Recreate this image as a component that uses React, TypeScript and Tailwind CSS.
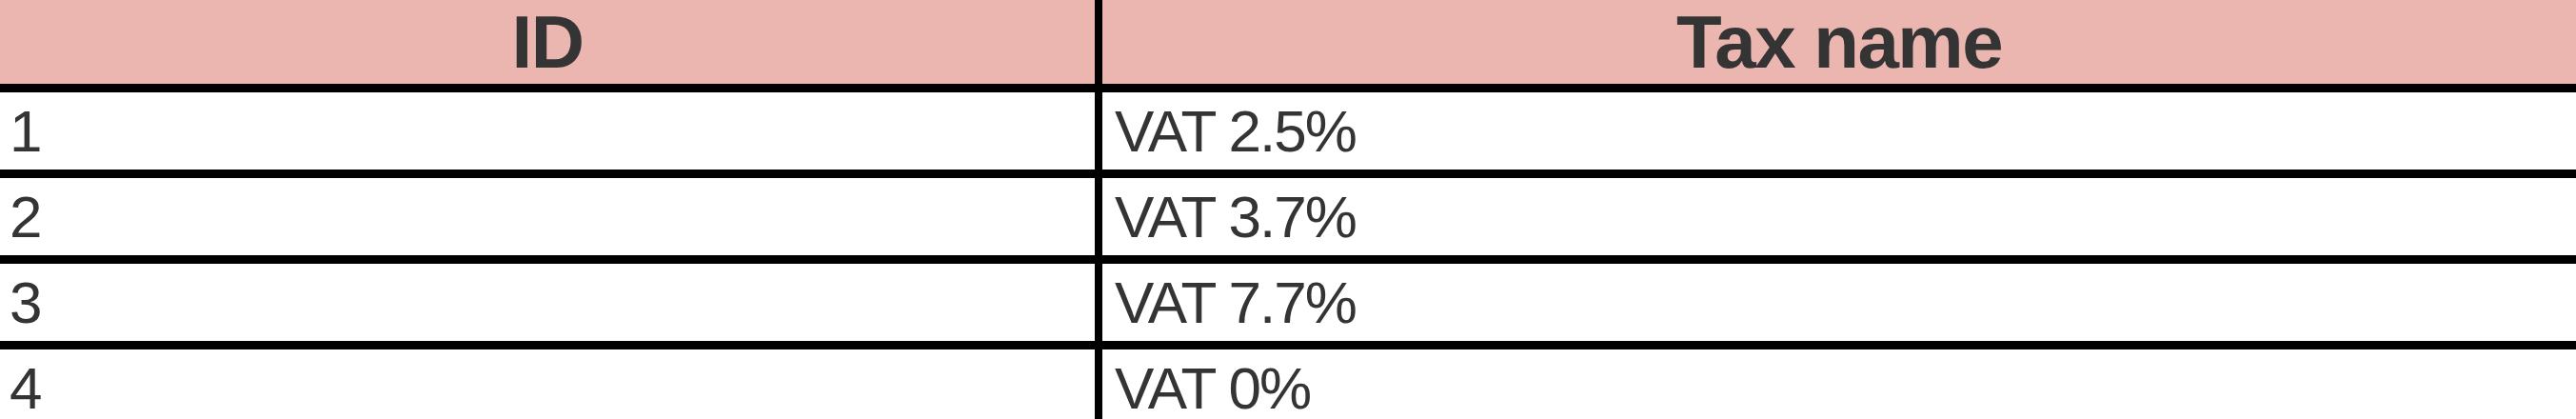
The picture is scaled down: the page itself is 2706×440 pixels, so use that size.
const rows = [
  { id: 1, name: "VAT 2.5%" },
  { id: 2, name: "VAT 3.7%" },
  { id: 3, name: "VAT 7.7%" },
  { id: 4, name: "VAT 0%" },
];

export default function App() {
  return (
    <div className="w-[2706px] h-[440px] overflow-hidden bg-white text-[#343434] font-['Liberation_Sans',Arial,sans-serif]">
      {/* Header */}
      <div className="flex h-[97px] bg-[#ebb5b0] border-b-[9px] border-black">
        <div className="w-[1158px] shrink-0 border-r-[8px] border-black flex items-center justify-center text-[78px] font-bold tracking-[-1.5px]">
          ID
        </div>
        <div className="flex-1 flex items-center justify-center text-[78px] font-bold tracking-[-1.5px]">
          Tax name
        </div>
      </div>

      {/* Rows */}
      {rows.map((row) => (
        <div key={row.id} className="flex h-[90px] border-b-[9px] border-black">
          <div className="w-[1158px] shrink-0 border-r-[8px] border-black flex items-center pl-[10px] text-[62px] tracking-[-2px]">
            {row.id}
          </div>
          <div className="flex-1 flex items-center pl-[13px] text-[62px] tracking-[-2px]">
            {row.name}
          </div>
        </div>
      ))}
    </div>
  );
}
